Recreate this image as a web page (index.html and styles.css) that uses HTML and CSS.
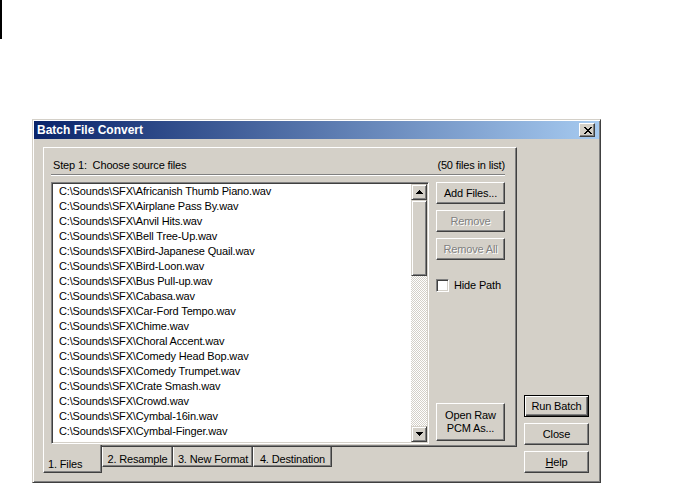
FILE: index.html
```html
<!DOCTYPE html>
<html lang="en">
<head>
    <meta charset="UTF-8">
    <title>Batch File Convert</title>
    <link rel="stylesheet" href="styles.css">
</head>
<body>
    <div class="edge"></div>

    <div class="dialog">
        <div class="titlebar">
            <span class="title">Batch File Convert</span>
            <button class="close-btn" aria-label="Close">
                <svg width="8" height="7" viewBox="0 0 8 7">
                    <path d="M0 0h2v1h-2z M6 0h2v1h-2z M1 1h2v1h-2z M5 1h2v1h-2z M2 2h4v1h-4z M3 3h2v1h-2z M2 4h4v1h-4z M1 5h2v1h-2z M5 5h2v1h-2z M0 6h2v1h-2z M6 6h2v1h-2z" fill="#000"/>
                </svg>
            </button>
        </div>

        <div class="dialog-body">
            <div class="tabs-area">
                <div class="pane">
                    <div class="pane-header">
                        <span>Step 1:&nbsp; Choose source files</span>
                        <span>(50 files in list)</span>
                    </div>
                    <div class="etched"></div>

                    <div class="pane-main">
                        <div class="listbox">
                            <div class="list-items">
                                <div class="list-item">C:\Sounds\SFX\Africanish Thumb Piano.wav</div>
                                <div class="list-item">C:\Sounds\SFX\Airplane Pass By.wav</div>
                                <div class="list-item">C:\Sounds\SFX\Anvil Hits.wav</div>
                                <div class="list-item">C:\Sounds\SFX\Bell Tree-Up.wav</div>
                                <div class="list-item">C:\Sounds\SFX\Bird-Japanese Quail.wav</div>
                                <div class="list-item">C:\Sounds\SFX\Bird-Loon.wav</div>
                                <div class="list-item">C:\Sounds\SFX\Bus Pull-up.wav</div>
                                <div class="list-item">C:\Sounds\SFX\Cabasa.wav</div>
                                <div class="list-item">C:\Sounds\SFX\Car-Ford Tempo.wav</div>
                                <div class="list-item">C:\Sounds\SFX\Chime.wav</div>
                                <div class="list-item">C:\Sounds\SFX\Choral Accent.wav</div>
                                <div class="list-item">C:\Sounds\SFX\Comedy Head Bop.wav</div>
                                <div class="list-item">C:\Sounds\SFX\Comedy Trumpet.wav</div>
                                <div class="list-item">C:\Sounds\SFX\Crate Smash.wav</div>
                                <div class="list-item">C:\Sounds\SFX\Crowd.wav</div>
                                <div class="list-item">C:\Sounds\SFX\Cymbal-16in.wav</div>
                                <div class="list-item">C:\Sounds\SFX\Cymbal-Finger.wav</div>
                                <div class="list-item">C:\Sounds\SFX\Cymbal-Sizzle.wav</div>
                            </div>
                            <div class="scrollbar">
                                <div class="scroll-btn">
                                    <svg width="7" height="4" viewBox="0 0 7 4">
                                        <path d="M3 0h1v1h-1z M2 1h3v1h-3z M1 2h5v1h-5z M0 3h7v1h-7z" fill="#000"/>
                                    </svg>
                                </div>
                                <div class="scroll-thumb"></div>
                                <div class="scroll-track"></div>
                                <div class="scroll-btn">
                                    <svg width="7" height="4" viewBox="0 0 7 4">
                                        <path d="M0 0h7v1h-7z M1 1h5v1h-5z M2 2h3v1h-3z M3 3h1v1h-1z" fill="#000"/>
                                    </svg>
                                </div>
                            </div>
                        </div>

                        <div class="side-buttons">
                            <button class="btn">Add Files...</button>
                            <button class="btn" disabled>Remove</button>
                            <button class="btn" disabled>Remove All</button>
                            <label class="check">
                                <span class="check-box"></span>
                                <span>Hide Path</span>
                            </label>
                            <button class="btn btn-tall">Open Raw<br>PCM As...</button>
                        </div>
                    </div>
                </div>

                <div class="tab-row">
                    <div class="tab tab-active tab-files">1. Files</div>
                    <div class="tab tab-resample">2. Resample</div>
                    <div class="tab tab-format">3. New Format</div>
                    <div class="tab tab-dest">4. Destination</div>
                </div>
            </div>

            <div class="dialog-buttons">
                <button class="btn btn-default">Run Batch</button>
                <button class="btn">Close</button>
                <button class="btn"><u>H</u>elp</button>
            </div>
        </div>
    </div>
</body>
</html>
```

FILE: styles.css
```css
html, body {
    margin: 0;
    height: 483px;
    overflow: hidden;
    background: #fff;
}
body {
    font-family: "Liberation Sans", Arial, sans-serif;
    font-size: 11px;
    letter-spacing: -0.15px;
    color: #000;
}
.edge {
    width: 2px;
    height: 39px;
    background: #000;
}

/* window frame */
.dialog {
    margin: 80px 0 0 32px;
    width: 569px;
    box-sizing: border-box;
    padding: 1px;
    background: #d4d0c8;
    border: 1px solid;
    border-color: #d4d0c8 #404040 #404040 #d4d0c8;
    box-shadow: inset 1px 1px #fff, inset -1px -1px #808080;
}
.titlebar {
    height: 18px;
    display: flex;
    align-items: center;
    justify-content: space-between;
    padding: 0 4px 0 3px;
    background: linear-gradient(to right, #0a246a, #a6caf0);
}
.title {
    color: #fff;
    font-size: 12px;
    font-weight: bold;
    letter-spacing: 0;
    line-height: 14px;
}
.close-btn {
    width: 16px;
    height: 14px;
    padding: 0 0 0 1px;
    display: flex;
    align-items: center;
    justify-content: center;
    background: #d4d0c8;
    border: 1px solid;
    border-color: #fff #404040 #404040 #fff;
    box-shadow: inset -1px -1px #808080;
}
.close-btn svg {
    display: block;
}

.dialog-body {
    display: flex;
    align-items: flex-end;
    gap: 7px;
    padding: 8px 10px 8px 9px;
}

/* tab control */
.tabs-area {
    width: 474px;
    display: flex;
    flex-direction: column;
}
.pane {
    height: 300px;
    box-sizing: border-box;
    padding: 10px 11px 0 7px;
    border: 1px solid;
    border-color: #fff #404040 #404040 #fff;
    box-shadow: inset -1px -1px #808080;
}
.pane-header {
    display: flex;
    justify-content: space-between;
    line-height: 14px;
    padding-left: 2px;
}
.etched {
    margin: 2px 0 6px;
    border-top: 1px solid #808080;
    border-bottom: 1px solid #fff;
}
.pane-main {
    display: flex;
    gap: 7px;
}

/* list box */
.listbox {
    width: 378px;
    height: 262px;
    box-sizing: border-box;
    display: flex;
    padding: 1px;
    background: #fff;
    border: 1px solid;
    border-color: #808080 #fff #fff #808080;
    box-shadow: inset 1px 1px #404040, inset -1px -1px #d4d0c8;
}
.list-items {
    flex: 1;
    overflow: hidden;
}
.list-item {
    line-height: 15px;
    padding-left: 6px;
    white-space: nowrap;
}
.scrollbar {
    width: 16px;
    display: flex;
    flex-direction: column;
}
.scroll-btn, .scroll-thumb {
    box-sizing: border-box;
    background: #d4d0c8;
    border: 1px solid;
    border-color: #d4d0c8 #404040 #404040 #d4d0c8;
    box-shadow: inset 1px 1px #fff, inset -1px -1px #808080;
}
.scroll-btn {
    height: 16px;
    display: flex;
    align-items: center;
    justify-content: center;
}
.scroll-btn svg {
    display: block;
}
.scroll-thumb {
    height: 76px;
}
.scroll-track {
    flex: 1;
    background: repeating-conic-gradient(#d4d0c8 0 25%, #fff 0 50%) 0 0 / 2px 2px;
}

/* buttons */
.side-buttons {
    width: 69px;
    display: flex;
    flex-direction: column;
    gap: 6px;
}
.btn {
    height: 22px;
    padding: 0;
    box-sizing: border-box;
    font-family: "Liberation Sans", Arial, sans-serif;
    font-size: 11px;
    letter-spacing: -0.15px;
    line-height: 13px;
    color: #000;
    background: #d4d0c8;
    border: 1px solid;
    border-color: #fff #404040 #404040 #fff;
    box-shadow: inset -1px -1px #808080;
}
.btn:disabled {
    color: #808080;
    text-shadow: 1px 1px 0 #fff;
}
.btn-tall {
    height: 38px;
    margin-top: auto;
    margin-bottom: 3px;
}
.btn-default {
    border-color: #000;
    box-shadow: inset 1px 1px #fff, inset -1px -1px #404040, inset -2px -2px #808080;
}
.dialog-buttons {
    width: 65px;
    display: flex;
    flex-direction: column;
    gap: 6px;
}
.dialog-buttons .btn {
    width: 65px;
}

.check {
    display: flex;
    align-items: center;
    gap: 5px;
    margin-top: 12px;
    line-height: 14px;
    white-space: nowrap;
}
.check-box {
    flex: none;
    width: 13px;
    height: 13px;
    box-sizing: border-box;
    background: #fff;
    border: 1px solid;
    border-color: #808080 #fff #fff #808080;
    box-shadow: inset 1px 1px #404040, inset -1px -1px #d4d0c8;
}

/* tabs along the bottom */
.tab-row {
    display: flex;
    align-items: flex-start;
    height: 26px;
}
.tab {
    height: 20px;
    box-sizing: border-box;
    padding-top: 5px;
    line-height: 14px;
    text-align: center;
    white-space: nowrap;
    border: 1px solid;
    border-top: none;
    border-color: #fff #404040 #404040 #fff;
    box-shadow: inset -1px -1px #808080;
}
.tab-active {
    height: 28px;
    margin-top: -2px;
    padding: 12px 0 0 4px;
    text-align: left;
    background: #d4d0c8;
}
.tab-files {
    width: 59px;
}
.tab-resample {
    width: 71px;
}
.tab-format {
    width: 80px;
}
.tab-dest {
    width: 79px;
}
```
